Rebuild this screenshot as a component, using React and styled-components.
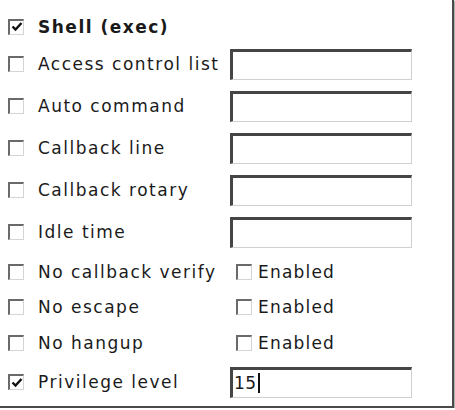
import React from "react";
import styled, { createGlobalStyle } from "styled-components";

const GlobalStyle = createGlobalStyle`
  html, body {
    margin: 0;
    padding: 0;
    background: #ffffff;
  }
  body {
    font-family: "DejaVu Sans", Verdana, sans-serif;
    color: #1a1a1a;
  }
`;

const rows = [
  { label: "Shell (exec)", checked: true, bold: true, kind: "none", h: 33 },
  { label: "Access control list", kind: "text", h: 42 },
  { label: "Auto command", kind: "text", h: 42 },
  { label: "Callback line", kind: "text", h: 42 },
  { label: "Callback rotary", kind: "text", h: 42 },
  { label: "Idle time", kind: "text", h: 42 },
  { label: "No callback verify", kind: "check", h: 38 },
  { label: "No escape", kind: "check", h: 32 },
  { label: "No hangup", kind: "check", h: 40 },
  { label: "Privilege level", checked: true, kind: "text", value: "15", caret: true, h: 38 },
];

const Check = ({ checked }) => (
  <CheckBox>
    {checked && (
      <svg width="12" height="12" viewBox="0 0 12 12">
        <path d="M1.5 5.5 L4.5 8.5 L10.5 2" fill="none" stroke="#111" strokeWidth="2.4" />
      </svg>
    )}
  </CheckBox>
);

const App = () => {
  return (
    <>
      <GlobalStyle />
      <Frame>
        {rows.map(row => (
          <Row key={row.label} h={row.h}>
            <Check checked={row.checked} />
            <Label bold={row.bold}>{row.label}</Label>
            {row.kind === "text" && (
              <TextBox>
                {row.value}
                {row.caret && <Caret />}
              </TextBox>
            )}
            {row.kind === "check" && (
              <Option>
                <Check />
                <span>Enabled</span>
              </Option>
            )}
          </Row>
        ))}
      </Frame>
    </>
  );
};

const Frame = styled.div`
  box-sizing: border-box;
  width: 454px;
  height: 408px;
  padding-top: 10px;
  border-right: 2px solid #4a4a4a;
  border-bottom: 2px solid #4a4a4a;
  box-shadow: 1px 1px 1px #b0b0b0;
  display: flex;
  flex-direction: column;
`;

const Row = styled.div`
  height: ${props => props.h}px;
  display: grid;
  grid-template-columns: 30px 192px auto;
  align-items: center;
  padding-left: 8px;
  font-size: 17px;
  letter-spacing: 1.2px;
`;

const CheckBox = styled.span`
  box-sizing: border-box;
  width: 16px;
  height: 16px;
  border-top: 2px solid #6a6a6a;
  border-left: 2px solid #6a6a6a;
  border-right: 1px solid #d4d4d4;
  border-bottom: 1px solid #d4d4d4;
  background: #ffffff;
  display: flex;
  align-items: center;
  justify-content: center;
`;

const Label = styled.span`
  font-weight: ${props => (props.bold ? "bold" : "normal")};
  white-space: nowrap;
  letter-spacing: 1.5px;
`;

const TextBox = styled.div`
  box-sizing: border-box;
  width: 182px;
  height: 31px;
  border-top: 3px solid #454545;
  border-left: 3px solid #454545;
  border-right: 1px solid #d0d0d0;
  border-bottom: 1px solid #d0d0d0;
  display: flex;
  align-items: center;
  padding-left: 1px;
  font-size: 17px;
  letter-spacing: 0.5px;
`;

const Caret = styled.span`
  width: 2px;
  height: 20px;
  background: #111;
  margin-left: 1px;
`;

const Option = styled.label`
  display: flex;
  align-items: center;
  gap: 6px;
  padding-left: 6px;
`;

export default App;
